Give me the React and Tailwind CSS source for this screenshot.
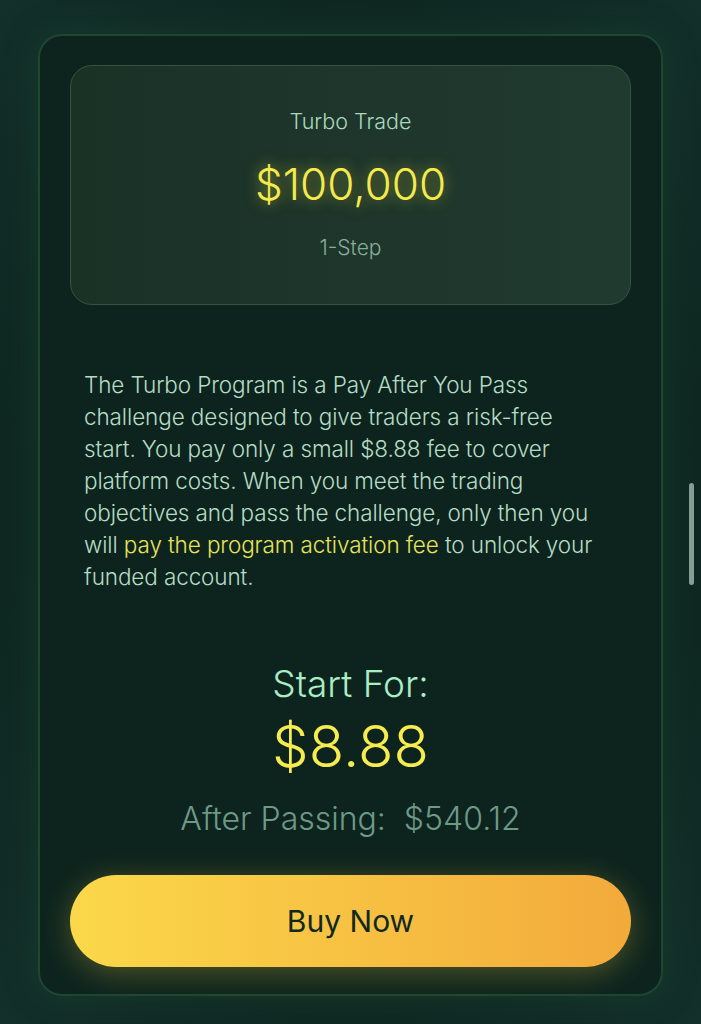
import React from 'react';

const Scrollbar = () => (
  <div className="absolute right-[7px] top-[483px] h-[102px] w-[5px] rounded-full bg-[#93aaa0]/90" />
);

const PlanCard = () => (
  <div className="flex h-[240px] flex-col items-center rounded-[22px] border border-[#34543f] bg-gradient-to-r from-[#1a3126] to-[#213a2f] pt-[40px]">
    <p className="text-[21.5px] font-light leading-[30px] text-[#a9d8bd]">Turbo Trade</p>
    <p className="mt-[22px] text-[44px] font-light leading-[52px] text-[#f4ea4c] [text-shadow:0_0_14px_rgba(240,225,60,0.55)]">
      $100,000
    </p>
    <p className="mt-[23px] text-[21px] font-light leading-[30px] text-[#88ad9b]">1-Step</p>
  </div>
);

// line breaks follow the design
const lines = [
  'The Turbo Program is a Pay After You Pass',
  'challenge designed to give traders a risk-free',
  'start. You pay only a small $8.88 fee to cover',
  'platform costs. When you meet the trading',
  'objectives and pass the challenge, only then you',
];

export default function App() {
  return (
    <div
      className="relative min-h-[1024px] overflow-hidden bg-[#0e2721] pt-[34px] font-['Inter',sans-serif]"
      style={{ backgroundImage: 'radial-gradient(ellipse at center, #0d241e 55%, #13302a 100%)' }}
    >
      <div className="mx-[38px] rounded-[24px] border-2 border-[#1e4631] bg-[#0d241e] px-[30px] pt-[29px] pb-[27px] shadow-[0_0_36px_rgba(40,110,70,0.25)]">
        <PlanCard />

        <p className="mt-[64px] ml-[14px] whitespace-nowrap text-[22.5px] font-light leading-[32px] tracking-[-0.005em] text-[#b6dcc5]">
          {lines.map((l) => (
            <span key={l} className="block">{l}</span>
          ))}
          <span className="block">
            will <span className="text-[#e9e35a]">pay the program activation fee</span> to unlock your
          </span>
          <span className="block">funded account.</span>
        </p>

        <div className="mt-[69px] flex flex-col items-center">
          <p className="text-[37px] font-light leading-[44px] text-[#a9ecc5]">Start For:</p>
          <p className="mt-[5px] text-[58px] font-light leading-[70px] text-[#f6ec4f]">$8.88</p>
          <p className="mt-[18px] text-[32px] font-light leading-[40px] text-[#6f9987]">
            After Passing:&nbsp; $540.12
          </p>
        </div>

        <button className="mt-[36px] flex h-[92px] w-full items-center justify-center rounded-full bg-gradient-to-r from-[#fbd84a] to-[#f2aa3b] text-[30px] font-normal text-[#10281d] shadow-[0_6px_30px_rgba(240,200,60,0.3)]">
          Buy Now
        </button>
      </div>
      <Scrollbar />
    </div>
  );
}
